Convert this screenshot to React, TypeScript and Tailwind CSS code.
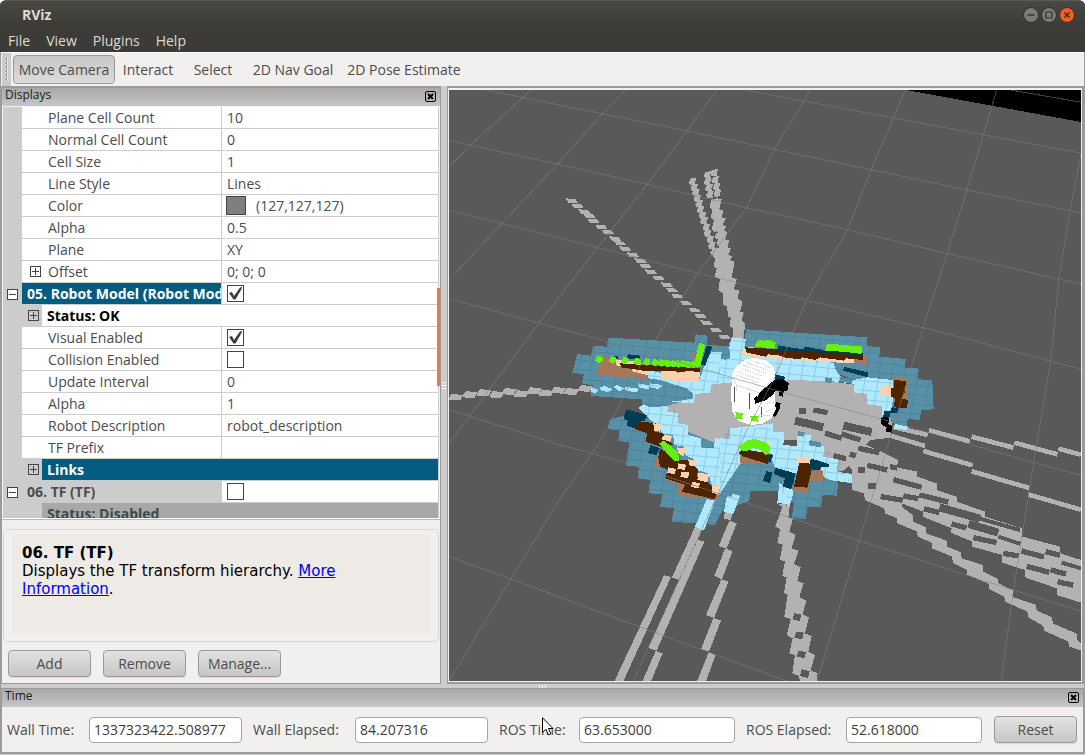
import { useState } from "react";
import type { ReactNode } from "react";

type Row = {
  id: string;
  kind: "prop" | "display" | "status";
  name: string;
  value?: string;
  check?: boolean;
  swatch?: boolean;
  expander?: "plus" | "minus";
  tone?: "selected" | "plain" | "disabled";
};

const rows: Row[] = [
  { id: "plane-count", kind: "prop", name: "Plane Cell Count", value: "10" },
  { id: "normal-count", kind: "prop", name: "Normal Cell Count", value: "0" },
  { id: "cell-size", kind: "prop", name: "Cell Size", value: "1" },
  { id: "line-style", kind: "prop", name: "Line Style", value: "Lines" },
  { id: "color", kind: "prop", name: "Color", value: "(127,127,127)", swatch: true },
  { id: "grid-alpha", kind: "prop", name: "Alpha", value: "0.5" },
  { id: "plane", kind: "prop", name: "Plane", value: "XY" },
  { id: "offset", kind: "prop", name: "Offset", value: "0; 0; 0", expander: "plus" },
  { id: "robot", kind: "display", name: "05. Robot Model (Robot Model)", check: true, tone: "selected" },
  { id: "robot-status", kind: "status", name: "Status: OK", expander: "plus", tone: "plain" },
  { id: "visual", kind: "prop", name: "Visual Enabled", check: true },
  { id: "collision", kind: "prop", name: "Collision Enabled", check: false },
  { id: "interval", kind: "prop", name: "Update Interval", value: "0" },
  { id: "robot-alpha", kind: "prop", name: "Alpha", value: "1" },
  { id: "description", kind: "prop", name: "Robot Description", value: "robot_description" },
  { id: "prefix", kind: "prop", name: "TF Prefix", value: "" },
  { id: "links", kind: "status", name: "Links", expander: "plus", tone: "selected" },
  { id: "tf", kind: "display", name: "06. TF (TF)", check: false, tone: "disabled" },
  { id: "tf-status", kind: "status", name: "Status: Disabled", tone: "disabled" },
];

const tools = [
  { name: "Move Camera", width: "w-[102px]" },
  { name: "Interact", width: "w-[66px]" },
  { name: "Select", width: "w-16" },
  { name: "2D Nav Goal", width: "w-24" },
  { name: "2D Pose Estimate", width: "w-[126px]" },
];

const times = [
  { id: "wall-time", label: "Wall Time:", value: "1337323422.508977" },
  { id: "wall-elapsed", label: "Wall Elapsed:", value: "84.207316" },
  { id: "ros-time", label: "ROS Time:", value: "63.653000" },
  { id: "ros-elapsed", label: "ROS Elapsed:", value: "52.618000" },
];

function Expander({ sign, label }: { sign: "plus" | "minus"; label: string }) {
  return (
    <button aria-label={"Toggle " + label} className="block size-[11px] shrink-0">
      <svg viewBox="0 0 11 11" className="block size-[11px]" shapeRendering="crispEdges">
        <path d="M.5.5h10v10H.5z" fill="none" stroke="#444" />
        <path d={sign === "plus" ? "M2 5.5h7M5.5 2v7" : "M2 5.5h7"} stroke="#444" />
      </svg>
    </button>
  );
}

function Check({ id, initial }: { id: string; initial: boolean }) {
  const [checked, setChecked] = useState(initial);
  return (
    <span className="grid size-[17px]">
      <input
        id={id}
        type="checkbox"
        checked={checked}
        onChange={(e) => setChecked(e.target.checked)}
        className="col-start-1 row-start-1 size-[17px] appearance-none border border-[#444] bg-white"
      />
      {checked && (
        <svg viewBox="0 0 17 17" className="pointer-events-none col-start-1 row-start-1 size-[17px]">
          <path d="M2 8l3-1 2 4 6-8.500 2-.5-.5 2L8.500 14.500H6.500z" fill="#3c3c3c" />
        </svg>
      )}
    </span>
  );
}

function PanelTitle({ children }: { children: ReactNode }) {
  return (
    <div className="flex h-[18px] shrink-0 items-start justify-between bg-linear-to-b from-[#a9a9a9] to-[#c6c6c6] pl-[3px] pr-1">
      <h2 className="text-xs leading-[14px] text-[#1a1a1a]">{children}</h2>
      <button aria-label={"Close " + children} className="mt-[3px] block size-[11px]">
        <svg viewBox="0 0 11 11" className="block size-[11px]">
          <rect x=".5" y=".5" width="10" height="10" rx="1.500" fill="none" stroke="#000" />
          <path d="M3 3l5 5M8 3l-5 5" stroke="#000" strokeWidth="2" />
        </svg>
      </button>
    </div>
  );
}

function PushButton({ children }: { children: ReactNode }) {
  return (
    <button className="h-[27px] w-[83px] rounded-[4px] border border-[#9c9a97] bg-linear-to-b from-[#e2e2e1] to-[#c6c6c5] text-sm leading-5 text-[#4c4c4c] shadow-[0_1px_1px_#dcdad8]">
      {children}
    </button>
  );
}

function PropertyRow({ row }: { row: Row }) {
  const line = "h-[22px] border-b border-[#ccc] p-0";

  if (row.kind === "status") {
    const tone =
      row.tone === "selected"
        ? "bg-[#055b80] text-white"
        : row.tone === "disabled"
          ? "bg-[#a8a8a8] text-[#3a4a4c]"
          : "bg-white text-black";
    return (
      <tr>
        <td className="h-[22px] bg-[#ccc] p-0" />
        <td colSpan={2} className={line}>
          <div className="flex h-[21px]">
            <span className="flex w-5 shrink-0 items-center bg-[#ccc] pl-1.5">
              {row.expander && <Expander sign={row.expander} label={row.name} />}
            </span>
            <span className={"flex-1 pl-[5px] font-bold leading-[21px] " + tone}>{row.name}</span>
          </div>
        </td>
      </tr>
    );
  }

  const isDisplay = row.kind === "display";
  const nameTone = !isDisplay
    ? "bg-white pl-2 font-normal"
    : row.tone === "selected"
      ? "bg-[#055b80] pl-[5px] font-bold text-white"
      : "bg-[#ccc] pl-[5px] font-bold";
  return (
    <tr>
      <td className="h-[22px] bg-[#ccc] p-0 pl-1">
        {isDisplay && (
          <span className="block w-[11px] bg-white">
            <Expander sign="minus" label={row.name} />
          </span>
        )}
      </td>
      <th scope="row" className={line + " overflow-hidden border-r text-left " + nameTone}>
        <div className="flex items-center">
          {!isDisplay && (
            <span className="w-[18px] shrink-0">
              {row.expander && <Expander sign={row.expander} label={row.name} />}
            </span>
          )}
          {row.check === undefined ? (
            <span className="leading-[21px]">{row.name}</span>
          ) : (
            <label htmlFor={row.id} className="whitespace-nowrap leading-[21px]">{row.name}</label>
          )}
        </div>
      </th>
      <td className={line + " bg-white pl-[5px]"}>
        <div className="flex items-center gap-2.5">
          {row.swatch && <span className="-ml-px h-[19px] w-5 border border-[#444] bg-[#7f7f7f]" />}
          {row.check !== undefined && <Check id={row.id} initial={row.check} />}
          {row.value}
        </div>
      </td>
    </tr>
  );
}

// Ground plane lines, crossing in two directions
const gridLines = [
  "M1370 10L1557 45", "M745 14L1557 178", "M115 14L600 120L1280 274L1557 334",
  "M22 145L287 207L505 260L742 320L990 378L1232 440L1557 520",
  "M22 328L150 362L383 425L627 491L890 562L1190 638L1557 742",
  "M22 558L240 622L500 697L639 742L827 801L1094 879L1442 986L1560 1020",
  "M22 848L292 940L452 987L746 1092L1018 1190L1393 1319L1560 1375",
  "M22 1232L172 1290L389 1377L843 1557",
  "M220 14L75 157L22 212", "M450 14L395 75L287 205L150 362L22 510",
  "M672 14L600 120L505 257L383 425L240 622L75 860L22 935",
  "M900 14L812 168L745 320L627 491L554 614L490 726L384 940L292 1079L172 1290L22 1557",
  "M1130 14L1048 220L990 378L890 562L814 763L749 893L627 1181L469 1557",
  "M1352 14L1280 274L1232 440L1179 614L1094 919L1018 1190L916 1557",
  "M1557 180L1530 330L1503 507L1483 722L1442 987L1393 1319L1363 1557",
];

const northWestRay = [
  [95, 122], [112, 138], [133, 155], [148, 168], [160, 183], [183, 201], [203, 216], [225, 236],
  [240, 250], [255, 266], [278, 284], [301, 302], [316, 318], [332, 335], [355, 354], [380, 374],
  [396, 391], [412, 409], [438, 430], [464, 451], [481, 468], [499, 488], [527, 510], [553, 531],
];
const northRay = [
  [458, 65], [463, 82], [468, 98], [472, 115], [478, 132], [482, 149], [488, 166], [492, 183],
  [499, 202], [503, 220], [511, 238], [516, 257], [523, 276], [503, 45], [523, 39], [503, 65],
  [526, 60], [507, 84], [530, 80], [510, 104], [532, 100], [536, 228], [528, 205],
];
const westRay = [
  [37, 815], [72, 808], [106, 803], [137, 808], [167, 800], [197, 806], [228, 798], [257, 804],
  [287, 797], [318, 800], [352, 792],
];
const greenDots = [
  [117, 118], [158, 120], [195, 121], [231, 124], [260, 126], [285, 128], [305, 129], [323, 131],
  [340, 131], [356, 132], [370, 131], [385, 134], [400, 134], [412, 132], [415, 118], [418, 104],
  [420, 92], [423, 80],
];

function Scene() {
  return (
    <svg
      viewBox="449 90 632 591"
      preserveAspectRatio="xMidYMid slice"
      className="block size-full bg-[#595959]"
      shapeRendering="crispEdges"
      role="img"
      aria-label="3D view of the robot on its local cost map"
    >
      <defs>
        <pattern id="cells" width="38" height="28" patternUnits="userSpaceOnUse" patternTransform="matrix(1 .09 -.16 1 0 0)">
          <path d="M0 1.500h38M1.500 0v28" stroke="#1f5b78" strokeOpacity=".22" strokeWidth="3" fill="none" />
        </pattern>
      </defs>
      <path d="M906 90H1081V122z" fill="#000" />

      {/* laser traces through free space */}
      <g fill="#b2b2b2">
        <g transform="translate(540 160) scale(.3333)">
          {northWestRay.map(([x, y]) => (
            <path key={x} transform={`translate(${x} ${y})`} d="M-18-7L11-5L19 6L-10 6z" />
          ))}
          {northRay.map(([x, y]) => (
            <path key={x + "-" + y} transform={`translate(${x} ${y})`} d="M-5-10L12-11L7 2L10 9L-7 10L-12 2z" />
          ))}
          <path d="M515 118L508 142L518 150L512 170L522 180L516 205L532 215L538 232L530 250L538 262L518 290L525 294L522 320L530 325L524 350L540 358L535 390L548 400L550 435L560 438L565 470L572 475L570 500L580 505L578 530L565 555L610 560L615 490L605 480L612 458L600 455L608 425L593 415L598 392L582 388L590 358L575 352L584 305L570 300L577 290L565 285L572 265L562 262L568 242L555 238L563 218L552 212L558 200L548 195L558 175L545 172L550 152L538 148L545 118L532 115z" />
        </g>
        <g transform="translate(440 85) scale(.4117 .3829)">
          {westRay.map(([x, y]) => (
            <path key={x} transform={`translate(${x} ${y})`} d="M-16 2L-9-9L19-5L12 9L-17 8z" />
          ))}
        </g>
        <g transform="translate(600 480) scale(.3333)">
          <path d="M290 130L312 137L238 300L216 292zM293 180L313 185L170 512L145 504zM192 286L213 291L70 604H43zM167 513L188 520L153 604H127z" />
          <path d="M388 122L410 130L380 206L356 198zM375 206L398 213L366 298L343 288zM364 298L386 305L342 414L318 405zM340 414L363 422L327 515L303 507zM326 517L347 524L318 604H291zM376 95L410 62L392 120L370 115z" />
          <path d="M530 70L547 80L526 140L540 148L532 188L548 195L540 238L555 245L547 288L560 292L552 338L563 345L553 410L572 418L560 465L578 475L568 520L585 525L577 580L597 588L600 604H650L653 580L632 572L645 525L625 515L635 468L615 460L627 412L607 403L620 362L598 352L611 310L592 303L602 262L582 252L596 212L575 205L587 165L568 155L578 118L565 112L570 75z" />
          <path d="M583 400L604 403L600 424L578 418zM589 455L612 458L606 478L583 473zM596 512L618 516L613 535L590 530zM605 568L629 573L624 594L600 588z" fill="#595959" />
        </g>
        <path d="M700 380L733 362L790 375L856 385L884 405L892 422L889 438L870 440L845 470L830 474L800 440L760 440L700 455L680 440L650 400z" />
        <g transform="translate(780 380) scale(.3333)">
          <path d="M120 60L340 150L275 175L240 185L355 240L350 262L412 275V290L470 310V330L530 350V365L615 395V410L727 445V470L840 500L842 520L903 540V668L830 645V625L735 592V570L667 548V525L577 500V485L512 458L515 445L428 410L430 395L365 370V380L398 405L400 425L438 442V460L500 482L502 500L543 517L545 535L608 555L610 575L655 597V610L698 630L700 652L768 675L770 692L817 712L818 730L892 762V780L903 790V812L867 800L865 785L792 752L790 738L745 712L742 695L675 665L673 650L628 627V612L562 585L560 570L518 548L517 530L455 505V488L413 470L412 455L352 430V415L315 400L313 385L255 360L252 340L217 330V270L130 190L40 130z" />
          <g fill="none" stroke="#b2b2b2" strokeWidth="14">
            <path d="M340 141L443 165M447 151L570 184M575 170L700 203M703 188L832 223M835 206L903 224" />
            <path d="M275 150L435 198M430 213L578 256M575 274L748 324M746 344L903 389" />
          </g>
          <g fill="none" stroke="#595959" strokeWidth="16">
            <path d="M58 93H78M100 90L143 98M135 159L185 175M185 162L242 180M160 227L198 236M210 222L228 228M235 205L298 218M262 256L322 270M235 270H254M330 260L352 264M340 299L425 322M418 345L505 366M302 350L368 361M370 348L415 356M265 318H287M432 386L478 398M515 432L560 444M580 473L650 488M670 520L716 528M725 513L792 531M797 515L840 526M740 559L808 577M812 570L858 582M833 605L880 616" />
            <path d="M45 122L130 142M190 137L275 156M478 382L600 416M566 432L655 458" strokeWidth="24" />
            <path d="M600 416L720 450M655 470L722 492M845 548L903 565" strokeWidth="12" />
          </g>
        </g>
      </g>

      {/* inflated obstacles, west and south-west */}
      <g transform="translate(560 320) scale(.3333)">
        <g fill="#5790a7">
          <path d="M145 53L403 68L407 43L443 47L440 75L540 80V138L440 138L430 190L400 222L405 235L330 255L250 265L245 238L92 228L98 196L65 190L72 163L37 158L52 102L92 107L100 78L140 80z" />
          <path d="M200 285L150 298L142 328L178 330L175 362L208 368L197 438L237 440L232 475L270 480L265 520L308 522L300 560L342 565L335 605L465 615L485 575L520 560L568 543L572 508H640V400H540L300 300z" />
        </g>
        <g fill="#afe9ff">
          <path d="M435 130L455 95L485 97L483 117L512 122L508 140L500 142L495 190L455 192L450 218L405 222L403 248L325 247L322 275L355 280L352 310L385 315V345L422 355L425 385H462L465 355L510 358L512 325L640 310V400H545L535 430L485 510L480 520L455 495L445 460L410 450L405 420L375 405L372 380L342 375L340 345L305 340L303 315L285 310L260 290L235 265L250 252L322 245L360 243L400 235V222L380 205L300 180L265 175V150L415 185L425 160z" />
          <path d="M95 203L115 208L108 220L92 216zM120 203L135 198L158 208L145 217L122 212zM160 200L172 195L192 205L178 214zM193 200L240 207L230 217L197 212zM233 190L270 196L265 208L238 203zM270 190L308 195L303 208L272 203z" />
          <path d="M440 540L465 543L432 632L405 620zM505 505L530 430L550 450L525 520L540 530L520 582L492 575z" />
        </g>
        <path d="M300 200L400 222V235L360 243L330 245L325 258L270 262L245 250L290 225z" fill="#5790a7" />
        <path d="M145 53L403 68L407 43L443 47L440 75H520L495 190L405 222L403 248L325 247L355 280L385 345L425 385L510 358L540 320L545 400L572 508L568 543L520 560L465 615L335 605L342 565L300 560L308 522L265 520L270 480L232 475L237 440L197 438L208 368L175 362L178 330L142 328L150 298L200 285L250 250L245 238L92 228L98 196L65 190L72 163L37 158L52 102L92 107L100 78L140 80z" fill="url(#cells)" />
        <path d="M125 108L265 135L262 178L110 165zM395 98L408 100L405 118L393 116zM290 410L308 412L305 445L282 443zM320 470L380 488L365 530L350 525L355 492L318 482zM355 495L480 525L470 538L352 528z" fill="#a47858" />
        <path d="M165 118L245 125L240 142L170 138zM215 140L268 147L263 165L218 155zM303 145L422 155L415 188L303 178z" fill="#ffd0b0" />
        <path d="M180 130L300 138L422 145L418 158L390 152L355 158L345 152L250 152L183 142zM230 303L288 310L285 335L310 340L340 375L300 380L257 365L262 340L225 328zM300 385L350 420L385 420L415 450L410 470L440 485L458 500L470 520L465 538L365 515L375 495L315 475L325 450L300 440L295 410z" fill="#4d2300" />
        <path d="M280 310L308 314L300 335L283 332zM315 343L338 348L330 365L303 358zM350 382L376 385L372 410L355 400zM355 430L378 434L374 450L352 446zM325 442L348 447L344 463L322 458zM365 455L389 458L383 475L361 470zM398 485L420 490L415 505L393 501zM385 418L410 422L408 440L387 436zM415 458L447 463L442 487L412 480zM458 496L482 500L477 524L455 518z" fill="#ffd0b0" />
        <path d="M200 268L260 285L255 303L235 305L225 325L200 318L203 303L190 295zM272 375L300 385L290 405L263 400zM440 78L457 80L435 138L422 133zM205 103L242 107L238 118L200 115zM163 108L175 109L172 118H163z" fill="#003c54" />
        <g fill="#66f00e">
          {greenDots.map(([x, y]) => (
            <path key={x} transform={`translate(${x} ${y})`} d="M-4-12L10-7L12 4L0 11L-12 4z" />
          ))}
          <path d="M298 370L312 362L355 398L357 422L342 422L325 405z" />
        </g>
      </g>

      {/* inflated obstacles, east and south-east */}
      <g transform="translate(720 320) scale(.3333)">
        <g fill="#5790a7">
          <path d="M78 28L443 52L440 78L480 82L478 110L557 117L555 143L597 146L593 178L637 180L641 268L603 270L600 300L563 297L560 325L525 315L500 280L520 180H440L360 165L70 100z" />
          <path d="M60 425L0 520L85 545L90 512H175L222 550L215 593L258 598L262 560L303 562L308 525L350 527L355 490L310 440L220 440L150 420z" />
        </g>
        <path d="M35 52L78 57L72 85L65 108L340 128L350 155L370 180L440 172L520 180L517 265L485 295V258L442 253L440 222L402 217L403 192L355 185L165 178L0 190V125L30 115L28 80zM0 355L30 357V323L150 325L155 335L193 337L190 375L230 378L232 350L240 342L275 345L272 372L313 378L310 410L355 418L350 455L395 462L397 490L328 480L265 440L225 460L165 445L150 400L60 400L62 430L0 520zM178 490L222 512L210 555L172 548zM527 312L565 320L560 330L522 325z" fill="#afe9ff" />
        <path d="M345 137L372 137L400 150L440 172L400 180L370 165L350 150zM317 172L338 176L334 190L315 186zM360 170L400 178L395 190L358 185zM235 334L255 337L250 350L232 347zM270 360L302 368L305 382L265 376z" fill="#5790a7" />
        <path d="M30 55L78 28L443 52L440 78L480 82L478 110L557 117L555 143L597 146L593 178L637 180L641 268L603 270L600 300L563 297L560 325L485 295V258L442 253L403 192L165 178L0 190V125L30 115zM0 355L30 323L150 325L190 375L230 378L240 342L275 345L355 418L397 490L355 490L350 527L308 525L303 562L262 560L258 598L215 593L222 550L175 512H90L85 545L0 520z" fill="url(#cells)" />
        <path d="M70 80L440 110L438 132L300 125L65 108zM483 197L515 199V230L480 228zM115 363L150 368L148 385L110 380zM230 408L270 415L262 440L232 432z" fill="#ffd0b0" />
        <path d="M405 105L442 110L440 135L402 130zM523 170L560 175V238L540 240L520 190zM60 395L150 410L140 433L60 428zM280 447L310 452L308 485L265 482zM222 490L268 498L262 520L220 515z" fill="#a47858" />
        <path d="M75 82L180 88L430 103L428 120L380 115L372 122L300 112L285 120L245 112L240 118L190 112L180 107L145 103L138 110L80 98zM523 180L558 183L555 215L545 235L565 240L560 265L522 262L525 235L512 230V205L523 205zM68 388L148 400L143 432L65 408zM238 428L268 430L275 450L262 503L222 500L232 455z" fill="#4d2300" />
        <path d="M175 76L208 82L250 88L255 80L310 90L430 98V106L300 98L175 92zM372 140L445 158L443 172L370 152zM165 443L225 460L222 485L213 507L188 500L195 475L162 462zM140 453L157 458L150 490L128 482zM272 415L327 432V442L305 440L300 450L268 448zM150 400L160 405L150 430L142 425zM55 400L65 388V405zM515 262L537 264L533 278L512 278L508 295L490 290L492 272L512 272zM165 163L195 170L192 182L160 178z" fill="#003c54" />
        <path d="M485 290L508 293L505 312L518 320L515 338L498 335L500 322L482 312z" fill="#000" />
        <path d="M108 66L122 60L135 62L150 60L167 68L165 86L105 80zM318 74L330 71L380 76L428 80L424 102L380 96L316 92zM60 378L80 362L105 357L135 366L150 380L148 400L138 405L120 388L95 384L78 395L62 390z" fill="#66f00e" />

        {/* robot */}
        <path d="M168 180L190 178L207 190L202 212H192L188 230L175 226L180 212L160 215zM168 245L182 250L178 270L165 292L158 288z" fill="#000" />
        <path d="M35 165L48 140L75 118L100 113L140 122L160 140L166 160L163 200L167 268L155 295L125 312L90 315L55 303L37 275L34 240z" fill="#fff" />
        <path d="M103 235L125 212L163 180L180 178L170 205L160 222L140 240L105 252z" fill="#000" />
        <path d="M43 200V245M89 220V268M125 260V290" stroke="#555" strokeWidth="3" />
        <path d="M38 172L50 195L118 218L160 175M50 195V212M118 218L112 230M140 250L163 245M138 275L165 265M90 290L150 285" fill="none" stroke="#ddd" strokeWidth="3" />
        <path d="M70 135L138 160M62 145L130 170M55 155L122 180M50 165L115 190M82 128L145 152M92 121L152 143" stroke="#ddd" strokeWidth="4" strokeDasharray="4 3" />
        <path d="M45 275L60 280L70 278L65 290L72 298L45 295L50 285zM90 287L120 288L112 296L115 305L95 303zM165 222L172 225L168 232z" fill="#66f00e" />
      </g>
      <g transform="translate(600 480) scale(.3333)">
        <path d="M320 58L345 60L312 137L290 130zM398 42L420 47L400 100L377 95z" fill="#afe9ff" />
      </g>

      <g transform="translate(440 85) scale(.4117 .3829)" fill="none" stroke="#808080" strokeOpacity=".5">
        {gridLines.map((d) => (
          <path key={d} d={d} vectorEffect="non-scaling-stroke" />
        ))}
      </g>
    </svg>
  );
}

function App() {
  const [tool, setTool] = useState("Move Camera");

  return (
    <div className="flex h-screen min-h-[600px] flex-col overflow-hidden bg-[#ccc] pb-px font-['Open_Sans','Noto_Sans',sans-serif] text-sm leading-5 text-[#4c4c4c]">
      <div className="bg-white">
        <header className="rounded-t-md border-t border-[#5b5a55] bg-[#3c3b37] bg-linear-to-b from-[#4a4843] via-[#3c3b37] to-[#3c3b37] text-[#dfdbd2]">
          <div className="flex h-7 items-center justify-between pl-[22px] pr-2.5">
            <h1 className="font-bold">RViz</h1>
            <div className="flex gap-0.5">
              <button aria-label="Minimize">
                <svg viewBox="0 0 16 16" className="block size-4">
                  <circle cx="8" cy="8" r="7.500" fill="#7d7b74" stroke="#31302c" />
                  <path d="M4.500 8h7" stroke="#33322e" strokeWidth="1.500" />
                </svg>
              </button>
              <button aria-label="Maximize">
                <svg viewBox="0 0 16 16" className="block size-4">
                  <circle cx="8" cy="8" r="7.500" fill="#7d7b74" stroke="#31302c" />
                  <path d="M5 5h6v6H5z" fill="none" stroke="#33322e" strokeWidth="1.200" />
                </svg>
              </button>
              <button aria-label="Close">
                <svg viewBox="0 0 16 16" className="block size-4">
                  <circle cx="8" cy="8" r="7.500" fill="#ee6029" stroke="#31302c" />
                  <path d="M5.500 5.500l5 5M10.500 5.500l-5 5" stroke="#5a2410" strokeWidth="1.500" />
                </svg>
              </button>
            </div>
          </div>
          <nav className="flex h-[23px] items-center gap-4 pl-2">
            <button>File</button>
            <button>View</button>
            <button>Plugins</button>
            <button>Help</button>
          </nav>
        </header>
      </div>

      <div className="flex min-h-0 flex-1 flex-col border-x border-[#9d9c9a]">
        <div role="toolbar" className="flex h-[34px] shrink-0 items-center border-t border-white bg-[#f1f0ef] pl-px">
          <svg viewBox="0 0 9 33" className="mr-0.5 h-[33px] w-[9px]" shapeRendering="crispEdges">
            <path d="M0 0h9v33H0z" fill="#ccc" />
            <path d="M5 5v24" stroke="#fff" strokeWidth="2" strokeDasharray="2 2" />
            <path d="M4 5v24" stroke="#777" strokeWidth="1" strokeDasharray="2 2" />
          </svg>
          {tools.map((item) => (
            <button
              key={item.name}
              onClick={() => setTool(item.name)}
              aria-pressed={tool === item.name}
              className={
                "h-[29px] whitespace-nowrap rounded-[4px] border " +
                item.width +
                (tool === item.name
                  ? " border-[#999] bg-linear-to-b from-[#c6c6c6] to-[#dcdcdb]"
                  : " border-transparent")
              }
            >
              {item.name}
            </button>
          ))}
        </div>

        <main className="flex min-h-0 flex-1">
          <section className="flex w-[440px] shrink-0 flex-col border border-t-2 border-[#9a9a98] bg-[#f1f0ef]">
            <PanelTitle>Displays</PanelTitle>
            <div className="relative min-h-0 flex-1 border border-[#f5f4f3] border-b-white">
              <div className="h-full overflow-hidden bg-[#ccc] pr-px">
                <table className="w-full table-fixed border-separate border-spacing-0">
                  <colgroup>
                    <col className="w-[19px]" />
                    <col className="w-[200px]" />
                    <col />
                  </colgroup>
                  <tbody>
                    {rows.map((row) => (
                      <PropertyRow key={row.id} row={row} />
                    ))}
                  </tbody>
                </table>
              </div>
              <div className="absolute -right-px top-[44%] h-[24%] w-[3px] bg-[#f07746]" />
            </div>
            <div className="mb-[9px] border-t border-[#bbb9b6]" />
            <article className="mx-px shrink-0 rounded-[5px] border border-[#d8d6d3] px-2 pb-[7px] pt-1">
              <div className="h-[100px] bg-[#eeebe7] px-2.5 py-2.5 font-['DejaVu_Sans',sans-serif] text-[15px] leading-[18px] text-black">
                <h3 className="font-bold">06. TF (TF)</h3>
                <p className="max-w-[330px]">
                  Displays the TF transform hierarchy.{" "}
                  <a href="#tf" className="text-[#0000f0] underline">More Information</a>.
                </p>
              </div>
            </article>
            <div className="flex shrink-0 gap-3 px-1.5 pb-[6px] pt-2">
              <PushButton>Add</PushButton>
              <PushButton>Remove</PushButton>
              <PushButton>Manage...</PushButton>
            </div>
          </section>

          <div className="flex w-[6px] shrink-0 flex-col items-center justify-center gap-0.5 bg-[#ccc]">
            <span className="h-px w-1 bg-white" />
            <span className="h-px w-1 bg-white" />
            <span className="h-px w-1 bg-white" />
          </div>

          <section className="min-w-0 flex-1 border-l border-t-2 border-b-2 border-r-2 border-[#9a9a98]">
            <div className="h-full overflow-hidden border border-t-2 border-[#f1f0ef]">
              <Scene />
            </div>
          </section>
        </main>

        <div className="flex h-[4px] shrink-0 items-center justify-center gap-0.5">
          <span className="h-[3px] w-px bg-white" />
          <span className="h-[3px] w-px bg-white" />
          <span className="h-[3px] w-px bg-white" />
        </div>

        <section className="relative shrink-0 border border-b-2 border-[#9a9a98] bg-[#f1f0ef]">
          <PanelTitle>Time</PanelTitle>
          <form
            className="grid h-[45px] grid-cols-[82px_153fr_113px_133fr_91px_156fr_111px_136fr_95px] items-center pl-[5px] pr-1.5"
            onSubmit={(e) => e.preventDefault()}
          >
            {times.map((time, index) => (
              <div key={time.id} className="contents">
                <label htmlFor={time.id} className={"whitespace-nowrap " + (index ? "pl-[11px]" : "")}>
                  {time.label}
                </label>
                <input
                  id={time.id}
                  type="text"
                  readOnly
                  value={time.value}
                  className="h-[26px] w-full min-w-0 rounded-[4px] border border-[#a8a6a3] bg-white px-1 text-[#3c3c3c]"
                />
              </div>
            ))}
            <div className="flex justify-end">
              <PushButton>Reset</PushButton>
            </div>
          </form>
          <svg viewBox="0 0 12 19" className="pointer-events-none absolute left-1/2 top-[28px] -ml-px h-[19px] w-3">
            <path d="M.5.8v14.500l3.500-3 2.300 5.500 2.500-1-2.300-5.300H11z" fill="#fff" stroke="#000" />
          </svg>
        </section>
      </div>
    </div>
  );
}

export default App;
